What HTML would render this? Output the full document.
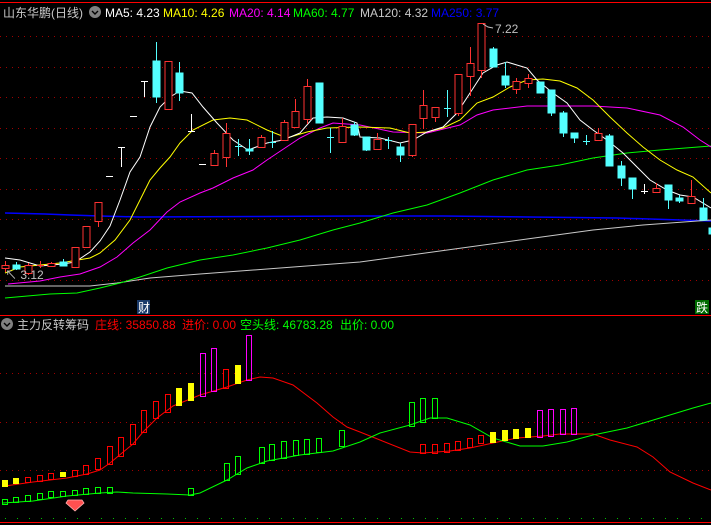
<!DOCTYPE html>
<html><head><meta charset="utf-8"><style>
html,body{margin:0;padding:0;background:#000;width:711px;height:525px;overflow:hidden}
svg{display:block}
text{font-family:"Liberation Sans","Noto Sans CJK SC",sans-serif;font-size:12px}
</style></head><body>
<svg width="711" height="525" viewBox="0 0 711 525" xmlns="http://www.w3.org/2000/svg">
<rect width="711" height="525" fill="#000"/>
<g stroke="#ff0000" stroke-width="1">
<line x1="0" y1="2.5" x2="711" y2="2.5"/>
<line x1="0" y1="315.5" x2="711" y2="315.5"/>
<line x1="0" y1="522.5" x2="711" y2="522.5"/>
</g>
<g stroke="#a00000" stroke-width="1" stroke-dasharray="1,5">
<line x1="0" y1="36.5" x2="711" y2="36.5"/><line x1="0" y1="67.5" x2="711" y2="67.5"/>
<line x1="0" y1="97.5" x2="711" y2="97.5"/><line x1="0" y1="128.5" x2="711" y2="128.5"/>
<line x1="0" y1="158.5" x2="711" y2="158.5"/><line x1="0" y1="189.5" x2="711" y2="189.5"/>
<line x1="0" y1="219.5" x2="711" y2="219.5"/><line x1="0" y1="249.5" x2="711" y2="249.5"/>
<line x1="0" y1="280.5" x2="711" y2="280.5"/>
<line x1="0" y1="373.5" x2="711" y2="373.5"/><line x1="0" y1="422.5" x2="711" y2="422.5"/>
<line x1="0" y1="470.5" x2="711" y2="470.5"/>
</g>
<line x1="5" y1="518.5" x2="711" y2="518.5" stroke="#00c000" stroke-dasharray="1,11"/>

<!-- MA lines -->
<g fill="none" stroke-width="1">
<polyline stroke="#0000ff" stroke-width="1.5" points="5,213 45,214 70,215 100,216 140,217 360,216 443,216 617,218 650,219 711,221"/>
<polyline stroke="#c8c8c8" points="5,286 90,286 117,283 150,278 200,274 267,269 333,264 360,262 440,251 527,239 593,230 643,225 711,220"/>
<polyline stroke="#00ff00" points="5,298 50,294 77,293 100,288 120,283 140,277 167,268 200,260 233,255 267,248 300,240 333,230 360,223 393,213 427,205 460,193 493,180 527,170 560,165 593,158 627,153 660,150 711,146"/>
<polyline stroke="#ff00ff" points="8,284 40,281 60,277 80,274 100,267 117,257 133,243 150,230 167,212 180,202 200,193 213,188 233,178 253,170 267,160 300,138 320,128 333,123 360,125 393,132 427,133 460,125 477,115 493,110 527,106 560,106 593,106 627,108 660,115 683,127 700,140 711,147"/>
<polyline stroke="#ffff00" points="5,273 20,267 60,263 90,258 100,253 115,240 130,220 140,200 150,180 160,168 170,157 180,143 193,130 213,120 230,118 247,120 267,130 287,138 307,132 327,128 360,127 390,128 410,133 427,132 443,128 460,120 477,103 493,97 510,87 527,80 543,79 560,81 577,88 593,100 610,117 627,133 643,147 660,160 677,170 693,177 711,193"/>
<polyline stroke="#ffffff" points="5,258 20,260 40,266 63,264 75,262 90,252 100,241 110,226 120,200 130,172 140,157 150,127 160,107 170,97 180,91 192,93 203,107 217,123 233,140 248,150 267,143 283,140 300,133 313,118 327,117 343,118 357,123 360,137 380,138 400,143 413,140 427,132 443,127 457,113 470,93 483,73 497,65 507,62 527,68 537,80 553,93 567,103 580,120 593,130 607,140 623,153 637,167 650,180 667,190 680,195 693,197 711,208"/>
</g>

<!-- red candles -->
<g stroke="#ff3232" fill="#000">
<line x1="5.5" y1="261" x2="5.5" y2="272"/><rect x="2" y="265.5" width="7" height="3"/>
<line x1="28.5" y1="263" x2="28.5" y2="275"/><rect x="25" y="265.5" width="7" height="8"/>
<line x1="40.5" y1="261" x2="40.5" y2="268"/><line x1="37" y1="265.5" x2="44" y2="265.5"/>
<line x1="51.5" y1="262" x2="51.5" y2="267"/><rect x="48" y="263.5" width="7" height="3"/>
<rect x="72" y="247.5" width="7" height="20"/>
<rect x="83" y="226.5" width="7" height="21"/>
<line x1="98.5" y1="202" x2="98.5" y2="227"/><rect x="95" y="202.5" width="7" height="19"/>
<rect x="165" y="61.5" width="7" height="48"/>
<line x1="214.5" y1="150" x2="214.5" y2="166"/><rect x="211" y="153.5" width="7" height="12"/>
<line x1="226.5" y1="123" x2="226.5" y2="167"/><rect x="223" y="133.5" width="7" height="24"/>
<line x1="261.5" y1="135" x2="261.5" y2="148"/><rect x="258" y="137.5" width="7" height="10"/>
<line x1="284.5" y1="120" x2="284.5" y2="141"/><rect x="281" y="122.5" width="7" height="18"/>
<line x1="295.5" y1="99" x2="295.5" y2="128"/><rect x="292" y="111.5" width="7" height="16"/>
<line x1="307.5" y1="79" x2="307.5" y2="124"/><rect x="304" y="86.5" width="7" height="33"/>
<line x1="342.5" y1="118" x2="342.5" y2="143"/><rect x="339" y="126.5" width="7" height="16"/>
<line x1="377.5" y1="133" x2="377.5" y2="150"/><rect x="374" y="139.5" width="7" height="10"/>
<line x1="412.5" y1="124" x2="412.5" y2="157"/><rect x="409" y="124.5" width="7" height="31"/>
<line x1="423.5" y1="90" x2="423.5" y2="129"/><rect x="420" y="105.5" width="7" height="13"/>
<line x1="435.5" y1="107" x2="435.5" y2="122"/><rect x="432" y="107.5" width="7" height="10"/>
<line x1="458.5" y1="74" x2="458.5" y2="116"/><rect x="455" y="74.5" width="7" height="39"/>
<line x1="470.5" y1="47" x2="470.5" y2="96"/><rect x="467" y="63.5" width="7" height="13"/>
<line x1="481.5" y1="23" x2="481.5" y2="78"/><rect x="478" y="23.5" width="7" height="47"/>
<line x1="516.5" y1="78" x2="516.5" y2="94"/><rect x="513" y="81.5" width="7" height="8"/>
<line x1="528.5" y1="74" x2="528.5" y2="88"/><rect x="525" y="78.5" width="7" height="5"/>
<line x1="598.5" y1="128" x2="598.5" y2="140"/><rect x="595" y="133.5" width="7" height="7"/>
<line x1="656.5" y1="183" x2="656.5" y2="192"/><rect x="653" y="188.5" width="7" height="4"/>
<line x1="691.5" y1="180" x2="691.5" y2="203"/><rect x="688" y="196.5" width="7" height="7"/>
</g>
<!-- cyan candles -->
<g stroke="#54ffff" fill="#54ffff">
<line x1="16.5" y1="262" x2="16.5" y2="270"/><rect x="13" y="265" width="7" height="4"/>
<line x1="63.5" y1="259" x2="63.5" y2="266"/><rect x="60" y="262" width="7" height="4"/>
<line x1="156.5" y1="42" x2="156.5" y2="103"/><rect x="153" y="61" width="7" height="36"/>
<line x1="179.5" y1="62" x2="179.5" y2="101"/><rect x="176" y="73" width="7" height="20"/>
<line x1="249.5" y1="139" x2="249.5" y2="155"/><rect x="246" y="149" width="7" height="2"/>
<rect x="316" y="83" width="7" height="40"/>
<line x1="354.5" y1="122" x2="354.5" y2="136"/><rect x="351" y="125" width="7" height="10"/>
<line x1="366.5" y1="137" x2="366.5" y2="151"/><rect x="363" y="137" width="7" height="13"/>
<line x1="400.5" y1="143" x2="400.5" y2="162"/><rect x="397" y="147" width="7" height="8"/>
<line x1="493.5" y1="47" x2="493.5" y2="67"/><rect x="490" y="49" width="7" height="18"/>
<line x1="505.5" y1="62" x2="505.5" y2="88"/><rect x="502" y="76" width="7" height="9"/>
<rect x="537" y="82" width="7" height="11"/>
<line x1="551.5" y1="90" x2="551.5" y2="116"/><rect x="548" y="90" width="7" height="23"/>
<line x1="563.5" y1="111" x2="563.5" y2="137"/><rect x="560" y="113" width="7" height="20"/>
<line x1="574.5" y1="133" x2="574.5" y2="143"/><rect x="571" y="133" width="7" height="5"/>
<line x1="609.5" y1="134" x2="609.5" y2="166"/><rect x="606" y="136" width="7" height="30"/>
<line x1="621.5" y1="161" x2="621.5" y2="186"/><rect x="618" y="166" width="7" height="12"/>
<line x1="632.5" y1="178" x2="632.5" y2="199"/><rect x="629" y="178" width="7" height="11"/>
<line x1="668.5" y1="185" x2="668.5" y2="209"/><rect x="665" y="185" width="7" height="15"/>
<line x1="679.5" y1="195" x2="679.5" y2="203"/><rect x="676" y="198" width="7" height="3"/>
<line x1="703.5" y1="198" x2="703.5" y2="220"/><rect x="700" y="208" width="7" height="12"/>
<rect x="709" y="228" width="3" height="6"/>
<line x1="238.5" y1="139" x2="238.5" y2="156"/><line x1="235" y1="146.5" x2="242" y2="146.5"/>
<line x1="272.5" y1="131" x2="272.5" y2="148"/><line x1="269" y1="142.5" x2="276" y2="142.5"/>
<line x1="330.5" y1="128" x2="330.5" y2="153"/><line x1="327" y1="137.5" x2="334" y2="137.5"/>
<line x1="388.5" y1="137" x2="388.5" y2="149"/><line x1="385" y1="140.5" x2="392" y2="140.5"/>
<line x1="447.5" y1="90" x2="447.5" y2="117"/><line x1="444" y1="108.5" x2="451" y2="108.5"/>
<line x1="586.5" y1="135" x2="586.5" y2="145"/><line x1="583" y1="141.5" x2="590" y2="141.5"/>
</g>
<g stroke="#ffffff">
<line x1="106" y1="176.5" x2="113" y2="176.5"/>
<line x1="118" y1="147.5" x2="125" y2="147.5"/><line x1="121.5" y1="147" x2="121.5" y2="167"/>
<line x1="130" y1="116.5" x2="137" y2="116.5"/>
<line x1="141" y1="81.5" x2="148" y2="81.5"/><line x1="144.5" y1="81" x2="144.5" y2="97"/>
<line x1="191.5" y1="114" x2="191.5" y2="131"/><line x1="188" y1="131.5" x2="195" y2="131.5"/>
<line x1="199" y1="164.5" x2="206" y2="164.5"/>
<line x1="644.5" y1="184" x2="644.5" y2="194"/><line x1="641" y1="191.5" x2="648" y2="191.5"/>
</g>
<polyline points="483,24 488,27 493,28" fill="none" stroke="#c0c0c0"/>
<text x="495" y="33" fill="#c0c0c0">7.22</text>
<text x="5" y="279" fill="#c0c0c0">↖ 3.12</text>

<!-- headers -->
<text x="3" y="17" fill="#c8c8c8" font-size="13">山东华鹏(日线)</text>
<circle cx="95" cy="12" r="6" fill="#808080"/><path d="M92 11l3 3 3-3" stroke="#000" fill="none" stroke-width="1.4"/>
<text x="105" y="17" fill="#ffffff">MA5: 4.23</text>
<text x="163" y="17" fill="#ffff00">MA10: 4.26</text>
<text x="229" y="17" fill="#ff00ff">MA20: 4.14</text>
<text x="293" y="17" fill="#00ff00">MA60: 4.77</text>
<text x="360" y="17" fill="#c8c8c8">MA120: 4.32</text>
<text x="431" y="17" fill="#0000ff">MA250: 3.77</text>

<rect x="137" y="300" width="13" height="14" fill="#1a3a6a"/>
<text x="138" y="312" fill="#ffffff" font-size="12">财</text>
<rect x="695" y="300" width="14" height="14" fill="#006a00"/>
<text x="696" y="312" fill="#ffffff" font-size="12">跌</text>

<circle cx="7" cy="324" r="6" fill="#808080"/><path d="M4 323l3 3 3-3" stroke="#000" fill="none" stroke-width="1.4"/>
<text x="17" y="329" fill="#c8c8c8" font-size="13">主力反转筹码</text>
<text x="95" y="329" fill="#ff0000">庄线: 35850.88</text>
<text x="182" y="329" fill="#ff0000">进价: 0.00</text>
<text x="240" y="329" fill="#00ff00">空头线: 46783.28</text>
<text x="340" y="329" fill="#00ff00">出价: 0.00</text>

<!-- lower lines -->
<polyline fill="none" stroke="#ff0000" points="5,486 33,482 67,478 87,474 100,470 110,463 122,453 133,444 143,432 157,418 173,406 200,395 227,387 247,380 260,377 273,378 293,385 317,403 333,417 347,427 360,432 380,440 410,452 423,453 450,451 470,448 493,443 517,438 543,436 560,434 593,434 610,440 637,447 653,457 670,472 693,483 711,490"/>
<polyline fill="none" stroke="#00ff00" points="3,503 33,501 67,496 100,493 117,492 133,493 167,494 190,495 200,493 227,480 247,468 267,461 300,455 333,451 360,442 380,433 410,425 430,418 447,418 470,425 493,438 520,446 543,446 567,442 593,435 627,428 660,418 693,408 711,403"/>
<!-- lower bars -->
<g fill="#ffff00">
<rect x="2" y="480" width="6" height="7"/><rect x="13" y="478" width="6" height="6"/>
<rect x="60" y="472" width="6" height="5"/><rect x="176" y="388" width="6" height="18"/>
<rect x="188" y="383" width="6" height="18"/><rect x="235" y="365" width="6" height="19"/>
<rect x="490" y="432" width="6" height="11"/><rect x="502" y="430" width="6" height="11"/>
<rect x="513" y="429" width="6" height="10"/><rect x="525" y="428" width="6" height="10"/>
</g>
<g fill="none" stroke="#ff0000">
<rect x="25.5" y="477.5" width="5" height="5"/><rect x="37.5" y="475.5" width="5" height="6"/>
<rect x="48.5" y="473.5" width="5" height="6"/><rect x="72.5" y="470.5" width="5" height="6"/>
<rect x="83.5" y="465.5" width="5" height="9"/><rect x="95.5" y="458.5" width="5" height="11"/>
<rect x="107.5" y="446.5" width="5" height="18"/><rect x="118.5" y="437.5" width="5" height="19"/>
<rect x="130.5" y="424.5" width="5" height="20"/><rect x="141.5" y="410.5" width="5" height="22"/>
<rect x="153.5" y="401.5" width="5" height="17"/><rect x="165.5" y="394.5" width="5" height="18"/>
<rect x="223.5" y="369.5" width="5" height="19"/>
<rect x="420.5" y="444.5" width="5" height="9"/><rect x="432.5" y="444.5" width="5" height="9"/>
<rect x="444.5" y="443.5" width="5" height="9"/><rect x="455.5" y="441.5" width="5" height="9"/>
<rect x="467.5" y="438.5" width="5" height="9"/><rect x="478.5" y="435.5" width="5" height="8"/>
</g>
<g fill="none" stroke="#ff00ff">
<rect x="200.5" y="353.5" width="5" height="43"/><rect x="211.5" y="348.5" width="5" height="43"/>
<rect x="246.5" y="335.5" width="5" height="45"/>
<rect x="537.5" y="410.5" width="5" height="27"/><rect x="548.5" y="409.5" width="5" height="27"/>
<rect x="560.5" y="409.5" width="5" height="25"/><rect x="571.5" y="408.5" width="5" height="26"/>
</g>
<g fill="none" stroke="#00ff00">
<rect x="2.5" y="499.5" width="5" height="5"/><rect x="13.5" y="497.5" width="5" height="5"/>
<rect x="25.5" y="495.5" width="5" height="6"/><rect x="37.5" y="493.5" width="5" height="6"/>
<rect x="48.5" y="491.5" width="5" height="6"/><rect x="60.5" y="491.5" width="5" height="5"/>
<rect x="72.5" y="490.5" width="5" height="5"/><rect x="83.5" y="488.5" width="5" height="6"/>
<rect x="95.5" y="487.5" width="5" height="6"/><rect x="107.5" y="487.5" width="5" height="6"/>
<rect x="188.5" y="488.5" width="5" height="7"/><rect x="224.5" y="463.5" width="5" height="17"/>
<rect x="235.5" y="456.5" width="5" height="18"/><rect x="259.5" y="447.5" width="5" height="16"/>
<rect x="269.5" y="444.5" width="5" height="16"/><rect x="281.5" y="441.5" width="5" height="17"/>
<rect x="293.5" y="440.5" width="5" height="15"/><rect x="304.5" y="439.5" width="5" height="15"/>
<rect x="316.5" y="438.5" width="5" height="14"/><rect x="339.5" y="430.5" width="5" height="16"/>
<rect x="409.5" y="402.5" width="5" height="24"/><rect x="420.5" y="398.5" width="5" height="24"/>
<rect x="432.5" y="398.5" width="5" height="20"/>
</g>
<path d="M68 500h14l2 3-9 8-9-8z" fill="#ff5050" stroke="#ffb0b0" stroke-width="0.8"/>
</svg>
</body></html>
